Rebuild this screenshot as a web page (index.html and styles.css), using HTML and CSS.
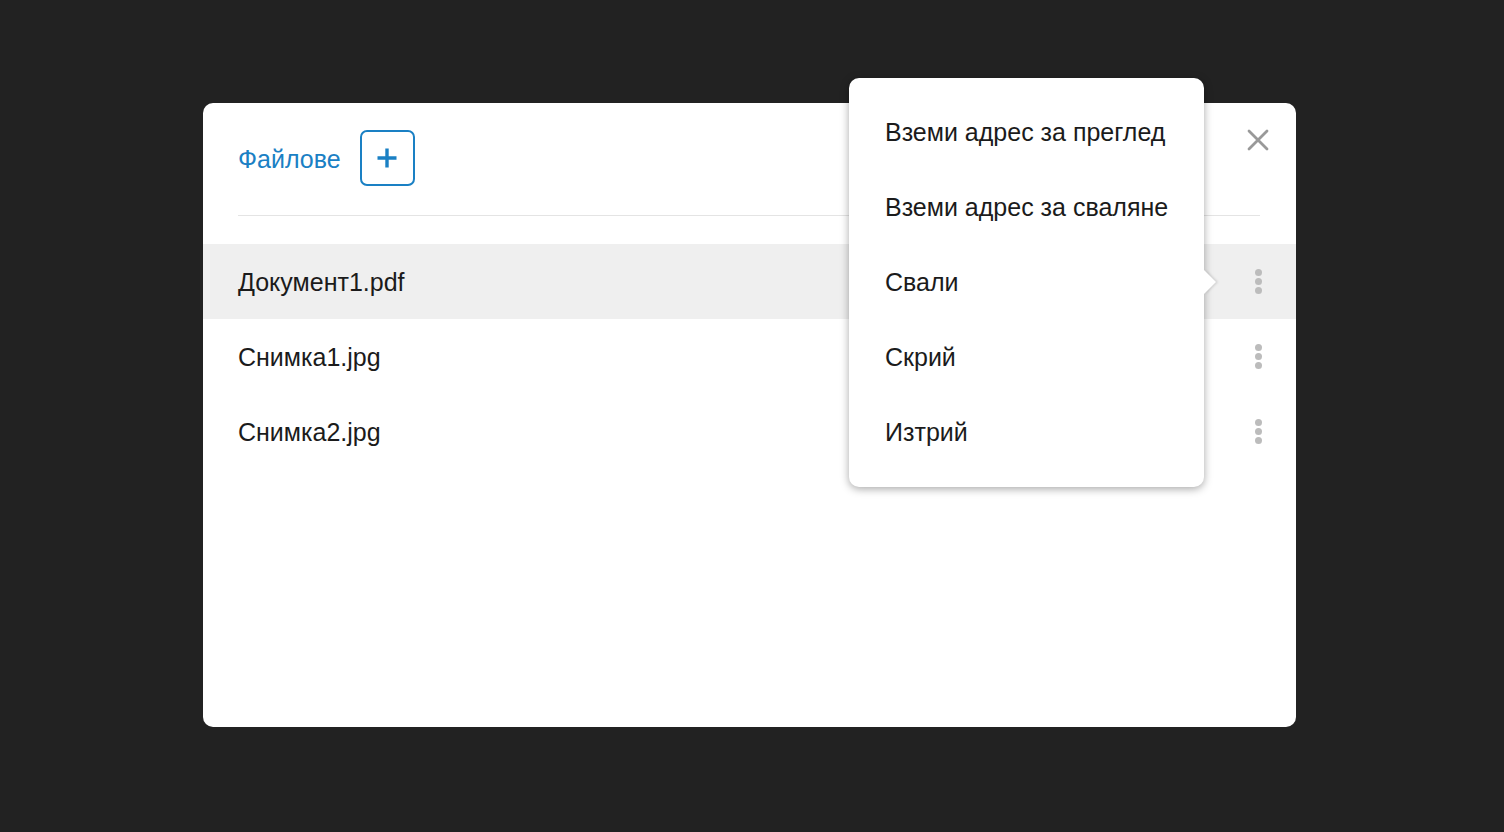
FILE: index.html
```html
<!DOCTYPE html>
<html lang="bg">
<head>
<meta charset="utf-8">
<link rel="stylesheet" href="styles.css">
</head>
<body>
<div class="stage">
  <div class="modal">
    <div class="header">
      <span class="title">Файлове</span>
      <button class="add-btn" aria-label="Добави">
        <svg width="22" height="22" viewBox="0 0 22 22"><path d="M11 1.5v19M1.5 11h19" stroke="#1a80c4" stroke-width="3.4" fill="none"/></svg>
      </button>
      <button class="close-btn" aria-label="Затвори">
        <svg width="24" height="24" viewBox="0 0 24 24"><path d="M3 3L21 21M21 3L3 21" stroke="#999999" stroke-width="2.8" stroke-linecap="round" fill="none"/></svg>
      </button>
    </div>
    <div class="sep"></div>
    <ul class="list">
      <li class="row active"><span class="name">Документ1.pdf</span><span class="dots"><i></i><i></i><i></i></span></li>
      <li class="row"><span class="name">Снимка1.jpg</span><span class="dots"><i></i><i></i><i></i></span></li>
      <li class="row"><span class="name">Снимка2.jpg</span><span class="dots"><i></i><i></i><i></i></span></li>
    </ul>
    <div class="menu">
      <div class="menu-item">Вземи адрес за преглед</div>
      <div class="menu-item">Вземи адрес за сваляне</div>
      <div class="menu-item">Свали</div>
      <div class="menu-item">Скрий</div>
      <div class="menu-item">Изтрий</div>
      <span class="arrow"></span>
    </div>
  </div>
</div>
</body>
</html>
```

FILE: styles.css
```css
* { box-sizing: border-box; }
html, body {
  margin: 0;
  padding: 0;
  background: #222222;
  font-family: "Liberation Sans", Arial, sans-serif;
}
.stage {
  width: 1504px;
  height: 832px;
  padding: 103px 0 0 203px;
}
.modal {
  position: relative;
  width: 1093px;
  height: 624px;
  background: #fff;
  border-radius: 10px;
}
.header {
  display: flex;
  align-items: center;
  padding: 27px 35px 0 35px;
  height: 82px;
}
.title {
  font-size: 25px;
  color: #1a80c4;
  margin-right: 19px;
  padding-top: 4px;
}
.add-btn {
  width: 55px;
  height: 56px;
  border: 2px solid #1a80c4;
  border-radius: 7px;
  background: #fff;
  display: flex;
  align-items: center;
  justify-content: center;
  padding: 0;
}
.close-btn {
  margin-left: auto;
  align-self: flex-start;
  margin-top: -2px;
  margin-right: -17px;
  width: 40px;
  height: 24px;
  border: 0;
  background: none;
  padding: 0;
  display: flex;
  justify-content: center;
}
.sep {
  margin: 30px 36px 0 35px;
  height: 1px;
  background: #e4e4e4;
}
.list {
  list-style: none;
  margin: 28px 0 0 0;
  padding: 0;
}
.row {
  height: 75px;
  display: flex;
  align-items: center;
  justify-content: space-between;
  padding: 0 34px 0 35px;
  font-size: 25px;
  color: #1b1b1b;
}
.row .name { padding-top: 2px; }
.row.active { background: #efefef; }
.dots {
  display: flex;
  flex-direction: column;
  gap: 2px;
}
.dots i {
  display: block;
  width: 7px;
  height: 7px;
  border-radius: 50%;
  background: #bcbcbc;
}
.menu {
  position: absolute;
  left: 646px;
  top: -25px;
  width: 355px;
  height: 409px;
  background: #fff;
  border-radius: 10px;
  padding: 17px 0;
  box-shadow: 0 2px 8px rgba(0,0,0,0.35);
}
.menu-item {
  height: 75px;
  display: flex;
  align-items: center;
  padding-left: 36px;
  font-size: 25px;
  color: #1b1b1b;
}
.arrow {
  position: absolute;
  right: -12px;
  top: 192px;
  width: 0;
  height: 0;
  border-top: 12px solid transparent;
  border-bottom: 12px solid transparent;
  border-left: 12px solid #fff;
  filter: drop-shadow(2px 0 1px rgba(0,0,0,0.12));
}
```
